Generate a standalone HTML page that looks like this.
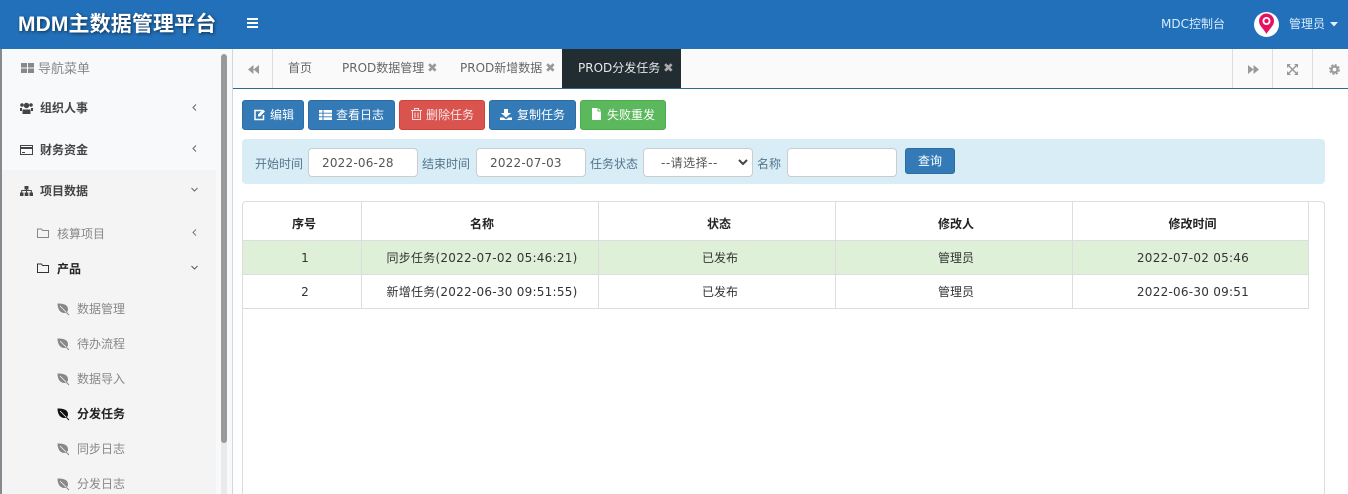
<!DOCTYPE html>
<html lang="zh"><head><meta charset="utf-8"><style>
*{box-sizing:border-box}
html,body{margin:0;width:1348px;height:494px;overflow:hidden;background:#fff}
body{position:relative;font:12px "DejaVu Sans","Noto Sans CJK SC",sans-serif;color:#333}
.a{position:absolute;white-space:nowrap}
svg{position:absolute;overflow:visible}
.sb{color:#444;font-weight:bold}
.g{color:#777}
.btn{position:absolute;top:100px;height:30px;border-radius:3px;color:#fff;line-height:28px;text-align:center;border:1px solid #2e6da4;background:#337ab7}
.tab{position:absolute;top:49px;height:39px;line-height:38px;color:#666}
.x{color:#999;font-size:12.5px;font-weight:bold;margin-left:-1px}
.lab{position:absolute;top:156px;color:#53758c;line-height:16px}
.inp{position:absolute;top:148px;height:29px;background:#fff;border:1px solid #ccc;border-radius:4px;color:#555;line-height:28px;padding-left:13px;letter-spacing:.2px}
.cell{position:absolute;text-align:center;color:#333;white-space:nowrap}
.th{top:216px;font-weight:bold;line-height:16px;color:#222}
.r1{top:250px;line-height:16px}
.r2{top:284px;line-height:16px}
.ls{letter-spacing:.25px}
.line{position:absolute;background:#ddd}
</style></head><body>
<div class="a" style="left:0;top:0;width:1348px;height:49px;background:#2270b9"></div>
<div class="a" style="left:18px;top:10px;font:bold 21px/29px 'Liberation Sans','Noto Sans CJK SC',sans-serif;letter-spacing:.12px;color:#fff;text-shadow:1px 1px 3px rgba(0,0,0,.6)">MDM主数据管理平台</div>
<svg style="left:247px;top:18px" width="11" height="10"><path d="M0 0h11v2H0zM0 4h11v2H0zM0 8h11v2H0z" fill="#fff"/></svg>
<div class="a" style="left:1161px;top:16px;color:#d8ecff;line-height:16px">MDC控制台</div>
<div class="a" style="left:1254px;top:12px;width:25px;height:25px;border-radius:50%;background:#fff"></div>
<svg style="left:1258px;top:13px" width="17" height="21"><path d="M8.500 21C6 16 1 13 1 8a7.500 7.500 0 0 1 15 0c0 5-5 8-7.500 13z" fill="#e5135f"/><circle cx="8.500" cy="8" r="4" fill="#fff"/><circle cx="8.500" cy="8" r="2.200" fill="#e5135f"/></svg>
<div class="a" style="left:1289px;top:16px;color:#d8ecff;line-height:16px">管理员</div>
<svg style="left:1330px;top:22px" width="8" height="5"><path d="M0 0h8L4 4.500z" fill="#e4f1ff"/></svg>

<div class="a" style="left:0;top:49px;width:232px;height:445px;background:#f8f9fb"></div>
<div class="a" style="left:0;top:49px;width:2px;height:445px;background:#858a8f"></div>
<div class="a" style="left:2px;top:170px;width:214px;height:324px;background:#f4f4f4"></div>
<div class="a" style="left:221px;top:440px;width:6px;height:54px;background:#e8eaec"></div>
<div class="a" style="left:221px;top:54px;width:6px;height:389px;background:#999;border-radius:3px"></div>
<div class="a" style="left:232px;top:49px;width:1px;height:445px;background:#d2d6de"></div>

<svg style="left:21px;top:63px" width="13" height="10"><path d="M0 0h6v4.500H0zM7 0h6v4.500H7zM0 5.500h6V10H0zM7 5.500h6V10H7z" fill="#888"/></svg>
<div class="a" style="left:38px;top:62px;line-height:16px;color:#888;font-size:13px">导航菜单</div>

<svg style="left:20px;top:102px" width="13" height="12"><circle cx="6.500" cy="3.500" r="2.700" fill="#444"/><circle cx="2" cy="3" r="1.800" fill="#444"/><circle cx="11" cy="3" r="1.800" fill="#444"/><path d="M2.500 12V7.500h8V12zM0 9V6h2v3zM11 6h2v3h-2z" fill="#444"/></svg>
<div class="a sb" style="left:40px;top:100px;line-height:16px">组织人事</div>
<svg style="left:192px;top:104px" width="5" height="7"><path d="M4 .500L1 3.500l3 3" fill="none" stroke="#666"/></svg>

<svg style="left:20px;top:145px" width="13" height="10"><path d="M.5.500h12v9H.5z" fill="none" stroke="#444"/><path d="M0 2h13v2H0zM2 7h3v1H2z" fill="#444"/></svg>
<div class="a sb" style="left:40px;top:142px;line-height:16px">财务资金</div>
<svg style="left:192px;top:145px" width="5" height="7"><path d="M4 .500L1 3.500l3 3" fill="none" stroke="#666"/></svg>

<svg style="left:20px;top:186px" width="13" height="10"><path d="M4.500 0h4v3.500h-4zM0 6.500h3.500V10H0zM4.700 6.500h3.600V10H4.700zM9.500 6.500H13V10H9.500z" fill="#444"/><path d="M1.700 7V4.500h9.600V7M6.500 3v4" fill="none" stroke="#444"/></svg>
<div class="a sb" style="left:40px;top:183px;line-height:16px">项目数据</div>
<svg style="left:191px;top:187px" width="7" height="5"><path d="M.5 1l3 3 3-3" fill="none" stroke="#666"/></svg>

<svg style="left:37px;top:228px" width="12" height="10"><path d="M.5 1h4l1 1.500h6v7H.5z" fill="none" stroke="#888"/></svg>
<div class="a" style="left:57px;top:226px;line-height:16px;color:#888">核算项目</div>
<svg style="left:192px;top:229px" width="5" height="7"><path d="M4 .500L1 3.500l3 3" fill="none" stroke="#777"/></svg>

<svg style="left:37px;top:263px" width="12" height="10"><path d="M.5 1h4l1 1.500h6v7H.5z" fill="none" stroke="#333"/></svg>
<div class="a" style="left:57px;top:261px;line-height:16px;color:#222;font-weight:bold">产品</div>
<svg style="left:191px;top:265px" width="7" height="5"><path d="M.5 1l3 3 3-3" fill="none" stroke="#555"/></svg>

<svg style="left:57px;top:303px" width="12" height="12"><path d="M.5.500C5 .500 11 1 11 6.500c0 2-1.500 3.500-3.500 3.500C3 10 .5 6 .5.500z" fill="#888"/><path d="M3 3l6 6" stroke="#f4f4f4" stroke-width=".8"/><path d="M9.500 9.500l2.500 2.500" stroke="#888"/></svg>
<div class="a" style="left:77px;top:301px;line-height:16px;color:#888">数据管理</div>
<svg style="left:57px;top:338px" width="12" height="12"><path d="M.5.500C5 .500 11 1 11 6.500c0 2-1.500 3.500-3.500 3.500C3 10 .5 6 .5.500z" fill="#888"/><path d="M3 3l6 6" stroke="#f4f4f4" stroke-width=".8"/><path d="M9.500 9.500l2.500 2.500" stroke="#888"/></svg>
<div class="a" style="left:77px;top:336px;line-height:16px;color:#888">待办流程</div>
<svg style="left:57px;top:373px" width="12" height="12"><path d="M.5.500C5 .500 11 1 11 6.500c0 2-1.500 3.500-3.500 3.500C3 10 .5 6 .5.500z" fill="#888"/><path d="M3 3l6 6" stroke="#f4f4f4" stroke-width=".8"/><path d="M9.500 9.500l2.500 2.500" stroke="#888"/></svg>
<div class="a" style="left:77px;top:371px;line-height:16px;color:#888">数据导入</div>
<svg style="left:57px;top:408px" width="12" height="12"><path d="M.5.500C5 .500 11 1 11 6.500c0 2-1.500 3.500-3.500 3.500C3 10 .5 6 .5.500z" fill="#111"/><path d="M3 3l6 6" stroke="#f4f4f4" stroke-width=".8"/><path d="M9.500 9.500l2.500 2.500" stroke="#111"/></svg>
<div class="a" style="left:77px;top:406px;line-height:16px;color:#222;font-weight:bold">分发任务</div>
<svg style="left:57px;top:443px" width="12" height="12"><path d="M.5.500C5 .500 11 1 11 6.500c0 2-1.500 3.500-3.500 3.500C3 10 .5 6 .5.500z" fill="#888"/><path d="M3 3l6 6" stroke="#f4f4f4" stroke-width=".8"/><path d="M9.500 9.500l2.500 2.500" stroke="#888"/></svg>
<div class="a" style="left:77px;top:441px;line-height:16px;color:#888">同步日志</div>
<svg style="left:57px;top:478px" width="12" height="12"><path d="M.5.500C5 .500 11 1 11 6.500c0 2-1.500 3.500-3.500 3.500C3 10 .5 6 .5.500z" fill="#888"/><path d="M3 3l6 6" stroke="#f4f4f4" stroke-width=".8"/><path d="M9.500 9.500l2.500 2.500" stroke="#888"/></svg>
<div class="a" style="left:77px;top:476px;line-height:16px;color:#888">分发日志</div>

<div class="a" style="left:233px;top:49px;width:1115px;height:40px;background:#fafafa;border-bottom:1px solid #2c6a8f"></div>
<div class="line" style="left:272px;top:49px;width:1px;height:39px"></div>
<svg style="left:248px;top:65px" width="11" height="9"><path d="M5.500 0v9L0 4.500zM11 0v9L5.500 4.500z" fill="#999"/></svg>
<div class="tab" style="left:288px">首页</div>
<div class="tab" style="left:342px">PROD数据管理 <span class="x">✖</span></div>
<div class="tab" style="left:460px">PROD新增数据 <span class="x">✖</span></div>
<div class="a" style="left:562px;top:49px;width:119px;height:39px;background:#222d32"></div>
<div class="tab" style="left:578px;color:#e8e8e8">PROD分发任务 <span class="x" style="color:#aaa">✖</span></div>
<div class="line" style="left:1232px;top:49px;width:1px;height:39px"></div>
<div class="line" style="left:1272px;top:49px;width:1px;height:39px"></div>
<div class="line" style="left:1312px;top:49px;width:1px;height:39px"></div>
<svg style="left:1248px;top:65px" width="11" height="9"><path d="M0 0v9l5.500-4.500zM5.500 0v9L11 4.500z" fill="#999"/></svg>
<svg style="left:1287px;top:64px" width="11" height="11"><path d="M0 0h4L0 4zM11 0v4L7 0zM0 11V7l4 4zM11 11H7l4-4z" fill="#999"/><path d="M1.500 1.500l8 8M9.500 1.500l-8 8" stroke="#999" stroke-width="1.500"/></svg>
<svg style="left:1329px;top:64px" width="11" height="11"><circle cx="5.500" cy="5.500" r="3" fill="none" stroke="#999" stroke-width="2.200"/><circle cx="5.500" cy="5.500" r="4.700" fill="none" stroke="#999" stroke-width="1.400" stroke-dasharray="2.200 1.500"/></svg>

<div class="btn" style="left:242px;width:62px;text-align:left;padding-left:27px">编辑</div>
<svg style="left:254px;top:109px" width="11" height="11"><path d="M8 1.500H1v9h8.500V6" fill="none" stroke="#fff" stroke-width="1.500"/><path d="M4 7.500V5.500L9 .500l2 2-5 5z" fill="#fff"/></svg>
<div class="btn" style="left:308px;width:87px;text-align:left;padding-left:27px">查看日志</div>
<svg style="left:319px;top:110px" width="13" height="10"><path d="M0 0h3.500v2.800H0zM4.500 0H13v2.800H4.500zM0 3.600h3.500v2.800H0zM4.500 3.600H13v2.800H4.500zM0 7.200h3.500V10H0zM4.500 7.200H13V10H4.500z" fill="#fff"/></svg>
<div class="btn" style="left:399px;width:86px;background:#d9534f;border-color:#d43f3a;text-align:left;padding-left:26px;color:#fbe5e5">删除任务</div>
<svg style="left:411px;top:108px" width="11" height="12"><path d="M0 2.500h11M3.500 2.500V.5h4v2M1.500 3v8.500h8V3M4 4.500v5.500M7 4.500v5.500" fill="none" stroke="#fbdede"/></svg>
<div class="btn" style="left:489px;width:87px;text-align:left;padding-left:27px">复制任务</div>
<svg style="left:500px;top:109px" width="12" height="11"><path d="M4 0h4v4h3L6 8.500 1 4h3zM0 8.500h3.500L6 10.500l2.500-2H12V11H0z" fill="#fff"/></svg>
<div class="btn" style="left:580px;width:86px;background:#5cb85c;border-color:#4cae4c;text-align:left;padding-left:26px">失败重发</div>
<svg style="left:592px;top:108px" width="9" height="12"><path d="M0 0h5.500v3.500H9V12H0zM6.500 0L9 2.500H6.500z" fill="#fff"/></svg>

<div class="a" style="left:242px;top:139px;width:1083px;height:45px;background:#d9edf7;border-radius:4px"></div>
<div class="lab" style="left:255px">开始时间</div>
<div class="inp" style="left:308px;width:110px">2022-06-28</div>
<div class="lab" style="left:422px">结束时间</div>
<div class="inp" style="left:476px;width:110px">2022-07-03</div>
<div class="lab" style="left:590px">任务状态</div>
<div class="inp" style="left:643px;width:110px;padding-left:17px;letter-spacing:.5px">--请选择--</div>
<svg style="left:738px;top:159px" width="10" height="7"><path d="M1 1l4 4 4-4" fill="none" stroke="#444" stroke-width="2"/></svg>
<div class="lab" style="left:757px">名称</div>
<div class="inp" style="left:787px;width:110px"></div>
<div class="btn" style="left:905px;top:148px;width:50px;height:26px;line-height:24px">查询</div>

<div class="a" style="left:242px;top:201px;width:1083px;height:310px;border:1px solid #ddd;border-radius:4px"></div>
<div class="a" style="left:243px;top:241px;width:1065px;height:33px;background:#dff0d8"></div>
<div class="line" style="left:243px;top:240px;width:1066px;height:1px"></div>
<div class="line" style="left:243px;top:274px;width:1066px;height:1px"></div>
<div class="line" style="left:243px;top:308px;width:1066px;height:1px"></div>
<div class="line" style="left:361px;top:202px;width:1px;height:106px"></div>
<div class="line" style="left:598px;top:202px;width:1px;height:106px"></div>
<div class="line" style="left:835px;top:202px;width:1px;height:106px"></div>
<div class="line" style="left:1072px;top:202px;width:1px;height:106px"></div>
<div class="line" style="left:1308px;top:202px;width:1px;height:106px"></div>

<div class="cell th" style="left:245px;width:118px">序号</div>
<div class="cell th" style="left:364px;width:236px">名称</div>
<div class="cell th" style="left:601px;width:236px">状态</div>
<div class="cell th" style="left:838px;width:236px">修改人</div>
<div class="cell th" style="left:1075px;width:235px">修改时间</div>

<div class="cell r1" style="left:246px;width:118px">1</div>
<div class="cell r1 ls" style="left:364px;width:236px">同步任务(2022-07-02 05:46:21)</div>
<div class="cell r1" style="left:602px;width:236px">已发布</div>
<div class="cell r1" style="left:838px;width:236px">管理员</div>
<div class="cell r1 ls" style="left:1073px;width:240px">2022-07-02 05:46</div>

<div class="cell r2" style="left:246px;width:118px">2</div>
<div class="cell r2 ls" style="left:364px;width:236px">新增任务(2022-06-30 09:51:55)</div>
<div class="cell r2" style="left:602px;width:236px">已发布</div>
<div class="cell r2" style="left:838px;width:236px">管理员</div>
<div class="cell r2 ls" style="left:1073px;width:240px">2022-06-30 09:51</div>
</body></html>
